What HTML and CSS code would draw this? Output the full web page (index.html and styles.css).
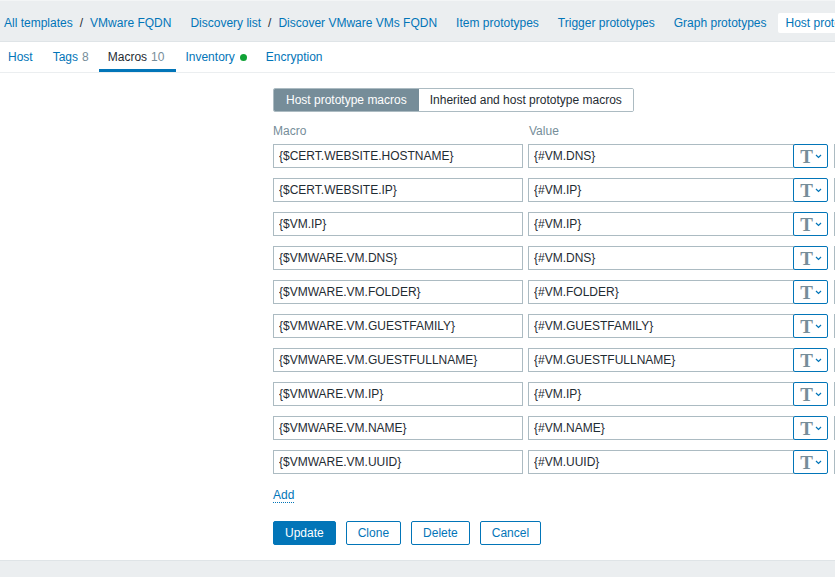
FILE: index.html
```html
<!DOCTYPE html>
<html>
<head>
<meta charset="utf-8">
<link rel="stylesheet" href="styles.css">
</head>
<body>
<nav class="crumbs">
  <ul class="crumb-list">
    <li class="crumb first"><a>All templates</a><span class="sep">/</span><a>VMware FQDN</a></li>
    <li class="crumb"><a>Discovery list</a><span class="sep">/</span><a>Discover VMware VMs FQDN</a></li>
    <li class="crumb"><a>Item prototypes</a></li>
    <li class="crumb"><a>Trigger prototypes</a></li>
    <li class="crumb"><a>Graph prototypes</a></li>
    <li class="crumb selected"><a>Host prototypes</a></li>
  </ul>
</nav>
<main class="main">
  <ul class="tabs">
    <li class="tab first"><a>Host</a></li>
    <li class="tab"><a>Tags</a> <span class="count">8</span></li>
    <li class="tab active"><a>Macros</a> <span class="count">10</span></li>
    <li class="tab"><a>Inventory</a> <span class="dot"></span></li>
    <li class="tab"><a>Encryption</a></li>
  </ul>
  <form class="form">
    <div class="segmented">
      <span class="seg on">Host prototype macros</span>
      <span class="seg">Inherited and host prototype macros</span>
    </div>
    <div class="macro-head">
      <span class="head-macro">Macro</span>
      <span class="head-value">Value</span>
    </div>
    <div class="rows">
      <div class="row"><input class="in-macro" value="{$CERT.WEBSITE.HOSTNAME}"><div class="val"><input class="in-value" value="{#VM.DNS}"><span class="tbtn"><span class="tglyph">T</span><svg class="chev" width="7" height="5" viewBox="0 0 7 5"><polyline points="1,1 3.5,3.5 6,1" fill="none" stroke="#0275b8" stroke-width="1.2"/></svg></span></div><input class="in-desc"></div>
      <div class="row"><input class="in-macro" value="{$CERT.WEBSITE.IP}"><div class="val"><input class="in-value" value="{#VM.IP}"><span class="tbtn"><span class="tglyph">T</span><svg class="chev" width="7" height="5" viewBox="0 0 7 5"><polyline points="1,1 3.5,3.5 6,1" fill="none" stroke="#0275b8" stroke-width="1.2"/></svg></span></div><input class="in-desc"></div>
      <div class="row"><input class="in-macro" value="{$VM.IP}"><div class="val"><input class="in-value" value="{#VM.IP}"><span class="tbtn"><span class="tglyph">T</span><svg class="chev" width="7" height="5" viewBox="0 0 7 5"><polyline points="1,1 3.5,3.5 6,1" fill="none" stroke="#0275b8" stroke-width="1.2"/></svg></span></div><input class="in-desc"></div>
      <div class="row"><input class="in-macro" value="{$VMWARE.VM.DNS}"><div class="val"><input class="in-value" value="{#VM.DNS}"><span class="tbtn"><span class="tglyph">T</span><svg class="chev" width="7" height="5" viewBox="0 0 7 5"><polyline points="1,1 3.5,3.5 6,1" fill="none" stroke="#0275b8" stroke-width="1.2"/></svg></span></div><input class="in-desc"></div>
      <div class="row"><input class="in-macro" value="{$VMWARE.VM.FOLDER}"><div class="val"><input class="in-value" value="{#VM.FOLDER}"><span class="tbtn"><span class="tglyph">T</span><svg class="chev" width="7" height="5" viewBox="0 0 7 5"><polyline points="1,1 3.5,3.5 6,1" fill="none" stroke="#0275b8" stroke-width="1.2"/></svg></span></div><input class="in-desc"></div>
      <div class="row"><input class="in-macro" value="{$VMWARE.VM.GUESTFAMILY}"><div class="val"><input class="in-value" value="{#VM.GUESTFAMILY}"><span class="tbtn"><span class="tglyph">T</span><svg class="chev" width="7" height="5" viewBox="0 0 7 5"><polyline points="1,1 3.5,3.5 6,1" fill="none" stroke="#0275b8" stroke-width="1.2"/></svg></span></div><input class="in-desc"></div>
      <div class="row"><input class="in-macro" value="{$VMWARE.VM.GUESTFULLNAME}"><div class="val"><input class="in-value" value="{#VM.GUESTFULLNAME}"><span class="tbtn"><span class="tglyph">T</span><svg class="chev" width="7" height="5" viewBox="0 0 7 5"><polyline points="1,1 3.5,3.5 6,1" fill="none" stroke="#0275b8" stroke-width="1.2"/></svg></span></div><input class="in-desc"></div>
      <div class="row"><input class="in-macro" value="{$VMWARE.VM.IP}"><div class="val"><input class="in-value" value="{#VM.IP}"><span class="tbtn"><span class="tglyph">T</span><svg class="chev" width="7" height="5" viewBox="0 0 7 5"><polyline points="1,1 3.5,3.5 6,1" fill="none" stroke="#0275b8" stroke-width="1.2"/></svg></span></div><input class="in-desc"></div>
      <div class="row"><input class="in-macro" value="{$VMWARE.VM.NAME}"><div class="val"><input class="in-value" value="{#VM.NAME}"><span class="tbtn"><span class="tglyph">T</span><svg class="chev" width="7" height="5" viewBox="0 0 7 5"><polyline points="1,1 3.5,3.5 6,1" fill="none" stroke="#0275b8" stroke-width="1.2"/></svg></span></div><input class="in-desc"></div>
      <div class="row"><input class="in-macro" value="{$VMWARE.VM.UUID}"><div class="val"><input class="in-value" value="{#VM.UUID}"><span class="tbtn"><span class="tglyph">T</span><svg class="chev" width="7" height="5" viewBox="0 0 7 5"><polyline points="1,1 3.5,3.5 6,1" fill="none" stroke="#0275b8" stroke-width="1.2"/></svg></span></div><input class="in-desc"></div>
    </div>
    <div class="add-line"><a class="add">Add</a></div>
    <div class="buttons">
      <button type="button" class="btn primary">Update</button>
      <button type="button" class="btn">Clone</button>
      <button type="button" class="btn">Delete</button>
      <button type="button" class="btn">Cancel</button>
    </div>
  </form>
</main>
</body>
</html>
```
FILE: styles.css
```css
html, body {
  margin: 0;
  padding: 0;
  overflow: hidden;
  height: 100%;
}
body {
  font-family: "Liberation Sans", Arial, sans-serif;
  font-size: 12px;
  line-height: 14px;
  color: #1f2c33;
  background: #ebeef0;
}
a { color: #0275b8; text-decoration: none; }
ul { list-style: none; margin: 0; padding: 0; }

.crumbs {
  background: #ebeef0;
  border-top: 1px solid #f3f5f6;
  border-bottom: 1px solid #dfe4e7;
  padding: 12px 0 8px 0;
  white-space: nowrap;
}
.crumb-list {
  display: flex;
  gap: 5px;
}
.crumb {
  padding: 3px 7px;
  border-radius: 2px;
  flex-shrink: 0;
}
.crumb.first { padding-left: 4px; }
.crumb.selected { background: #ffffff; }
.sep { margin: 0 7px; color: #1f2c33; }

.main {
  background: #ffffff;
  border-bottom: 1px solid #dfe4e7;
  padding-bottom: 15px;
}
.tabs {
  display: flex;
  height: 30px;
  border-bottom: 1px solid #ebeef0;
  white-space: nowrap;
  margin-left: -1px;
}
.tab {
  padding: 1px 10px 0 9px;
  line-height: 29px;
  display: flex;
  align-items: center;
}
.tab.first { padding-right: 11px; }
.tab.active { box-shadow: inset 0 -3px 0 #0275b8; padding-right: 12px; }
.tab.active a { color: #1f2c33; }
.count { color: #768d99; margin-left: 4px; font-size: 12px; }
.dot {
  display: inline-block;
  width: 7px;
  height: 7px;
  border-radius: 50%;
  background: #10a236;
  margin-left: 5px;
}

.form {
  margin-left: 273px;
  padding-top: 15px;
}
.segmented {
  display: inline-flex;
  height: 24px;
  box-sizing: border-box;
  border: 1px solid #acbbc2;
  border-radius: 2px;
  overflow: hidden;
}
.seg {
  padding: 0 11px;
  line-height: 22px;
  background: #ffffff;
  color: #1f2c33;
  white-space: nowrap;
}
.seg.on {
  background: #768d99;
  color: #ffffff;
  padding: 0 12px 0 12px;
}

.macro-head {
  display: flex;
  gap: 6px;
  color: #768d99;
  padding-top: 12px;
  margin-bottom: 6px;
}
.head-macro { width: 250px; }
.head-value { width: 300px; }

.rows {
  display: flex;
  flex-direction: column;
  gap: 10px;
}
.row {
  display: flex;
  gap: 5px;
  white-space: nowrap;
}
input {
  font-family: "Liberation Sans", Arial, sans-serif;
  font-size: 12px;
  color: #1f2c33;
  height: 24px;
  box-sizing: border-box;
  border: 1px solid #acbbc2;
  border-radius: 0;
  padding: 0 5px;
  margin: 0;
  background: #ffffff;
  outline: none;
}
.in-macro { width: 250px; flex-shrink: 0; }
.val { display: flex; flex-shrink: 0; }
.in-value { width: 266px; }
.in-desc { width: 300px; flex-shrink: 0; margin-left: 1px; }
.tbtn {
  width: 35px;
  height: 24px;
  box-sizing: border-box;
  border: 1px solid #0275b8;
  border-radius: 2px;
  margin-left: -1px;
  display: flex;
  align-items: center;
  justify-content: center;
  gap: 2px;
  background: #ffffff;
}
.tglyph {
  font-family: "Liberation Serif", "DejaVu Serif", serif;
  font-weight: bold;
  font-size: 19px;
  line-height: 16px;
  color: #768d99;
  margin-left: 1px;
  margin-top: 2px;
}
.chev { display: block; margin-top: 1px; }

.add-line { margin-top: 14px; }
.add {
  border-bottom: 1px dotted #0275b8;
  line-height: 14px;
}
.buttons {
  display: flex;
  gap: 10px;
  margin-top: 19px;
}
.btn {
  font-family: "Liberation Sans", Arial, sans-serif;
  font-size: 12px;
  height: 24px;
  padding: 0 11px;
  border: 1px solid #0275b8;
  border-radius: 2px;
  background: #ffffff;
  color: #0275b8;
  margin: 0;
  line-height: 22px;
}
.btn.primary { background: #0275b8; color: #ffffff; }
```
